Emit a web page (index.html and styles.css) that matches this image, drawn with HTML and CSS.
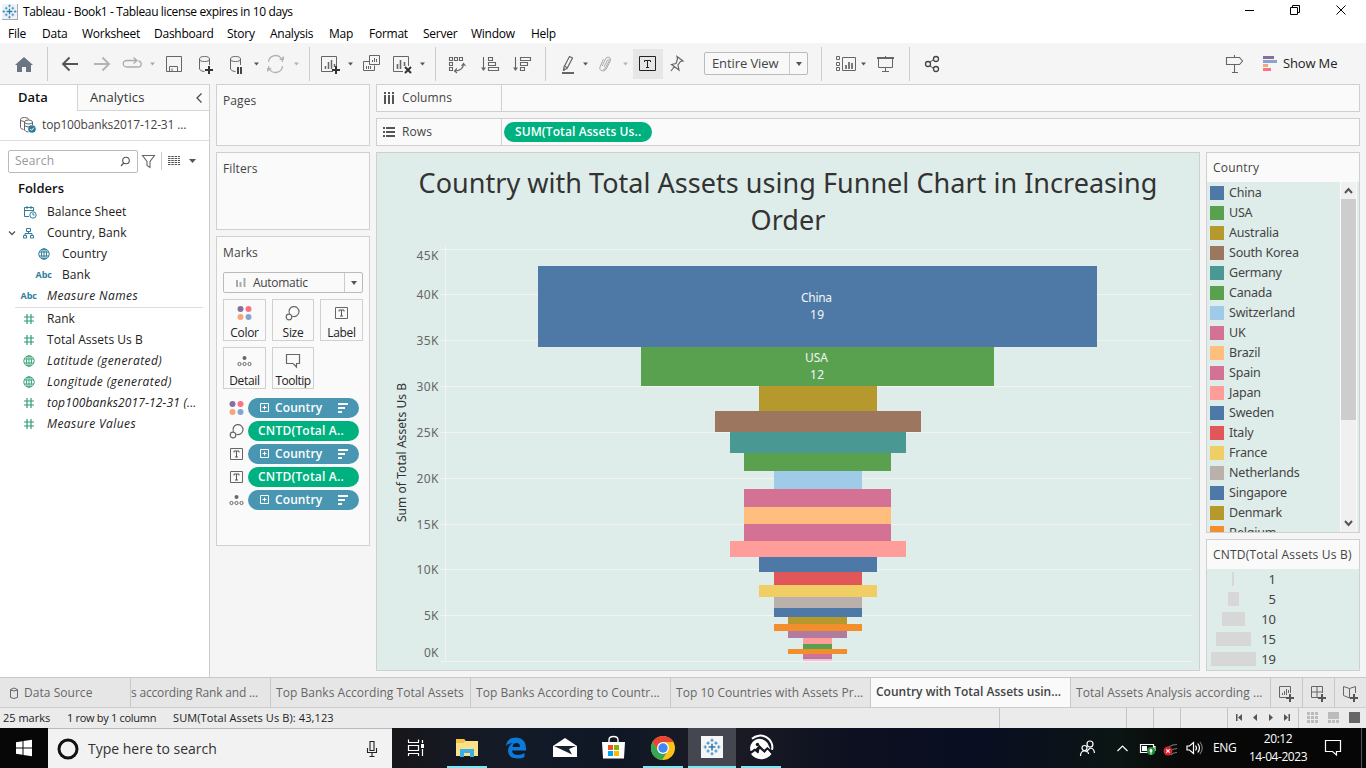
FILE: index.html
```html
<!DOCTYPE html>
<html lang="en">
<head>
<meta charset="utf-8">
<title>Tableau - Book1</title>
<link rel="stylesheet" href="styles.css">
</head>
<body>
<svg class="defs" width="0" height="0">
  <defs>
    <symbol id="tlogo" viewBox="0 0 16 16"><path d="M8 5v6M5 8h6" stroke="#2b7bb0" stroke-width="1.4"/><path d="M8 .5v3M6.500 2h3M8 12.500v3M6.500 14h3M.5 8h3M2 6.500v3M12.500 8h3M14 6.500v3M4.500 3v3M3 4.500h3M11.500 3v3M10 4.500h3M4.500 10v3M3 11.500h3M11.500 10v3M10 11.500h3" stroke="#4a93bd" stroke-width="1"/></symbol>
    <symbol id="hash" viewBox="0 0 12 12"><path d="M4 1v10M8 1v10M1 4h10M1 8h10" stroke="#2f9e74" stroke-width="1.200" fill="none"/></symbol>
    <symbol id="globe" viewBox="0 0 12 12"><g fill="none" stroke="currentColor" stroke-width="1"><circle cx="6" cy="6" r="5.200"/><ellipse cx="6" cy="6" rx="2.500" ry="5.200"/><path d="M1.200 4h9.600M1.200 8h9.600M6 .8v10.400"/></g></symbol>
    <symbol id="dots" viewBox="0 0 16 16"><circle cx="3.500" cy="4" r="3" fill="#876f9c"/><circle cx="11.500" cy="4" r="3" fill="#fc7183"/><circle cx="3.500" cy="12" r="3" fill="#f4a67c"/><circle cx="11.500" cy="12" r="3" fill="#86a4cf"/></symbol>
    <symbol id="size" viewBox="0 0 16 16"><g fill="none" stroke="#666" stroke-width="1.200"><path d="M4.500 8.800A5 5 0 1 1 7.300 11.300"/><circle cx="4" cy="12" r="2.800"/></g></symbol>
    <symbol id="label" viewBox="0 0 16 16"><path d="M1.500 2.500h12v11h-12z" fill="none" stroke="#666"/><path d="M5 6.500V5h5v1.500M7.500 5v6M6 11h3" fill="none" stroke="#555"/></symbol>
    <symbol id="detail" viewBox="0 0 16 16"><circle cx="7.500" cy="5" r="2" fill="#666"/><g fill="none" stroke="#666"><circle cx="2.500" cy="11" r="1.600"/><circle cx="7.500" cy="11" r="1.600"/><circle cx="12.500" cy="11" r="1.600"/></g></symbol>
    <symbol id="plusbox" viewBox="0 0 10 10"><path d="M.5 .5h8v8h-8zM2.500 4.500h4M4.500 2.500v4" fill="none" stroke="#fff"/></symbol>
    <symbol id="sort" viewBox="0 0 12 12"><path d="M1 2h10M1 6h7M1 10h4" stroke="#fff" stroke-width="2"/></symbol>
  </defs>
</svg>

<header class="titlebar">
  <svg class="applogo" width="16" height="16"><use href="#tlogo"/></svg>
  <span class="apptitle">Tableau - Book1 - Tableau license expires in 10 days</span>
  <svg class="winctl" width="126" height="22" viewBox="1240 0 126 22"><path d="M1245 10.500h9M1290.500 7.500h7v7h-7zM1292.500 7V5.500h7v7h-2M1336.500 5.500l9 9M1345.500 5.500l-9 9" fill="none" stroke="#000"/></svg>
</header>

<nav class="menu">
  <span>File</span><span>Data</span><span>Worksheet</span><span>Dashboard</span><span>Story</span><span>Analysis</span><span>Map</span><span>Format</span><span>Server</span><span>Window</span><span>Help</span>
</nav>

<div class="toolbar">
  <svg width="48" height="41" viewBox="0 43 48 41"><path d="M15 65l9-8 9 8h-2v7h-5v-5h-4v5h-5v-7z" fill="#6b7583"/><path d="M47.500 47v34" stroke="#ccc"/></svg>
  <svg width="38" height="41" viewBox="48 43 38 41"><path d="M78 64H63M69.500 57.500L63 64l6.500 6.500" stroke="#555" stroke-width="1.900" fill="none"/></svg>
  <svg width="32" height="41" viewBox="86 43 32 41"><path d="M94 64h15M102.500 57.500L109 64l-6.500 6.500" stroke="#b4b4b4" stroke-width="1.900" fill="none"/></svg>
  <svg width="42" height="41" viewBox="118 43 42 41"><path d="M136 60.500h-9a3.500 3 0 0 0 0 6.500h10a3.500 3 0 0 0 1.500-6M133.500 57.500l3.500 3-3.500 3" stroke="#aaa" stroke-width="1.300" fill="none"/><path d="M150 62.500h5l-2.500 3z" fill="#aaa"/></svg>
  <svg width="30" height="41" viewBox="160 43 30 41"><path d="M166.500 56.500h15v15h-15zM169.500 71v-4.500h8V71M172 71v-2.500" stroke="#666" fill="none"/></svg>
  <svg width="32" height="41" viewBox="190 43 32 41"><g fill="none" stroke="#666"><ellipse cx="204.500" cy="59" rx="5" ry="2.500"/><path d="M199.500 59v10q1 2.500 5 2.500M209.500 59v6"/></g><path d="M209 66v8M205 70h8" stroke="#333" stroke-width="2"/></svg>
  <svg width="44" height="41" viewBox="222 43 44 41"><g fill="none" stroke="#666"><ellipse cx="235.500" cy="59" rx="5" ry="2.500"/><path d="M230.500 59v10q1 2.500 5 2.500M240.500 59v6"/></g><path d="M238 67v7M241 67v7" stroke="#333" stroke-width="1.800"/><path d="M254 62.500h5l-2.500 3z" fill="#555"/></svg>
  <svg width="46" height="41" viewBox="266 43 46 41"><path d="M268.500 62a7 7 0 0 1 13-3M282.500 66a7 7 0 0 1-13 3M268.500 66q0 2 1.500 4M282.500 62q0-2-1-3" stroke="#b4b4b4" fill="none" stroke-width="1.300"/><path d="M279 60h5v-4zM267 68h5l-5 4z" fill="#b4b4b4"/><path d="M294 62.500h5l-2.500 3z" fill="#b4b4b4"/><path d="M309.500 47v34" stroke="#ccc"/></svg>
  <svg width="44" height="41" viewBox="312 43 44 41"><path d="M333 71.500h-11.500v-15h15V66" stroke="#666" fill="none"/><path d="M325.500 69v-3M328.500 69v-7M331.500 69v-9M334.500 67v-3" stroke="#666" stroke-width="1.500"/><path d="M336 66v8M332 70h8" stroke="#333" stroke-width="2"/><path d="M348 62.500h5l-2.500 3z" fill="#555"/></svg>
  <svg width="32" height="41" viewBox="356 43 32 41"><path d="M369.500 55.500h10v9h-10zM369 61.500h-5.500v9h11v-5M366.500 69v-3M368.500 69v-3M370.500 69v-3M372.500 62v-2M374.500 62v-4M376.500 62v-3" stroke="#666" fill="none"/></svg>
  <svg width="50" height="41" viewBox="388 43 50 41"><path d="M403 71.500h-9.500v-15h15V66" stroke="#666" fill="none"/><path d="M397.500 69v-5M400.500 69v-9M404.500 66v-4" stroke="#666" stroke-width="1.600"/><path d="M405 67l6 6M411 67l-6 6" stroke="#333" stroke-width="2"/><path d="M420 62.500h5l-2.500 3z" fill="#555"/><path d="M435.500 47v34" stroke="#ccc"/></svg>
  <svg width="36" height="41" viewBox="438 43 36 41"><path d="M449.500 57.500h3v3h-3zM454.500 57.500h3v3h-3zM459.500 57.500h3v3h-3zM449.500 62.500h3v3h-3zM449.500 67.500h3v3h-3zM463.500 64q0 6-8 7M461.500 66l2-2.500 2 2.500M457 68.500l-2.500 2.500 2.500 2" fill="none" stroke="#666" stroke-width="1.100"/></svg>
  <svg width="32" height="41" viewBox="474 43 32 41"><path d="M483.500 57v13M488.500 57.500h4v3h-4zM488.500 62.500h7v3h-7zM488.500 67.500h10v3h-10z" fill="none" stroke="#666" stroke-width="1.100"/><path d="M481 67.500h5l-2.500 3.500z" fill="#666"/></svg>
  <svg width="42" height="41" viewBox="506 43 42 41"><path d="M515.500 57v13M520.500 57.500h10v3h-10zM520.500 62.500h7v3h-7zM520.500 67.500h4v3h-4z" fill="none" stroke="#666" stroke-width="1.100"/><path d="M513 67.500h5l-2.500 3.500z" fill="#666"/><path d="M545.500 47v34" stroke="#ccc"/></svg>
  <svg width="46" height="41" viewBox="548 43 46 41"><path d="M564 67l5.500-10.500 3 1.500-5.500 10.500-3.500 1.500zM564 66l3.500 1.800M564 68v3" fill="none" stroke="#666" stroke-width="1.200"/><path d="M562 73h12" stroke="#666" stroke-width="2"/><path d="M583 62.500h5l-2.500 3z" fill="#555"/></svg>
  <svg width="39" height="41" viewBox="594 43 39 41"><path d="M602 66l4-8q2-2 4 0 1 1 .5 2.500l-4.500 9q-2 2.500-5 1-2-1.500-1-3.500l3.500-8M604 67l3.500-7q1-1 2 0L605 69q-1 1-2 0" fill="none" stroke="#aaa"/><path d="M623 62.500h5l-2.500 3z" fill="#b4b4b4"/></svg>
  <svg width="30" height="41" viewBox="633 43 30 41"><path d="M633 49h30v30h-30z" fill="#e6e6e6"/><path d="M639.500 56.500h16v14h-16z" fill="none" stroke="#222"/><path d="M644.500 62v-1.500h6v1.500M647.500 60v8M646 67.500h3" fill="none" stroke="#222"/></svg>
  <svg width="41" height="41" viewBox="663 43 41 41"><path d="M677 56.500l6 4.500-2.500.5-2.500 3.500 1 5-7.500-5.500 4.500-1 1.500-4.500zM674.500 66.500l-3.500 4.500" fill="none" stroke="#666" stroke-width="1.200"/></svg>
  <div class="fit"><span>Entire View</span><i></i></div>
  <svg width="60" height="41" viewBox="808 43 60 41"><path d="M821.500 47v34" stroke="#ccc"/><path d="M836.500 56.500h3v3h-3zM836.500 62.500h3v3h-3zM836.500 67.500h3v3h-3zM842.500 57.500h13v13h-13z" fill="none" stroke="#666"/><path d="M846 69v-4M849 69v-7M852 69v-6" stroke="#666" stroke-width="1.700"/><path d="M861 62.500h5l-2.500 3z" fill="#555"/></svg>
  <svg width="46" height="41" viewBox="868 43 46 41"><path d="M877 58h17" stroke="#666" stroke-width="2"/><path d="M878.500 59v8.500h14V59M885.500 56v2M885.500 68v3M882 71.500h7" stroke="#666" fill="none"/><path d="M909.500 47v34" stroke="#ccc"/></svg>
  <svg width="40" height="41" viewBox="914 43 40 41"><path d="M928 63.500l7-5M928 64.500l7 5" stroke="#444"/><g fill="#f5f5f5" stroke="#444" stroke-width="1.300"><circle cx="928" cy="64" r="2.500"/><circle cx="936" cy="59" r="2.500"/><circle cx="936" cy="69" r="2.500"/></g></svg>
  <svg class="signpost" width="36" height="41" viewBox="1220 43 36 41"><path d="M1226.500 57.500h13l3 3.500-3 3.500h-13zM1234.500 55v2M1234.500 64.500v8M1232 72.500h6" fill="none" stroke="#666" stroke-width="1.100"/></svg>
  <svg width="27" height="41" viewBox="1256 43 27 41"><path d="M1263 56h11v3h-11z" fill="#876f9c"/><path d="M1263 60h14v3h-14z" fill="#86a4cf"/><path d="M1263 64h5v3h-5z" fill="#f4a67c"/><path d="M1263 68h8v3h-8z" fill="#fc7183"/></svg>
  <span class="showme">Show Me</span>
</div>

<main class="work">
  <aside class="datapane">
    <div class="dtabs"><b class="ton">Data</b><div class="toff"><span>Analytics</span><svg width="8" height="10" viewBox="0 0 8 10"><path d="M6.500 .5L2 5l4.500 4.500" fill="none" stroke="#444" stroke-width="1.200"/></svg></div></div>
    <div class="source"><svg width="18" height="18" viewBox="0 0 18 18"><g fill="none" stroke="#666"><ellipse cx="5.500" cy="3.500" rx="4" ry="2"/><path d="M1.500 3.500v8q1 2 3 2"/><ellipse cx="9.500" cy="6" rx="4" ry="2" fill="#fff"/><path d="M5.500 6v8q1 2 4 2M13.500 6v3M6 10q3 2 6 0"/></g><circle cx="13" cy="13" r="3.800" fill="#2f7d9c"/><path d="M11.300 13l1.300 1.300 2.300-2.600" stroke="#fff" fill="none"/></svg><span>top100banks2017-12-31 ...</span></div>
    <div class="searchrow">
      <div class="search"><span>Search</span><svg width="11" height="11" viewBox="0 0 11 11"><circle cx="6" cy="4.500" r="3.300" fill="none" stroke="#555" stroke-width="1.100"/><path d="M3.700 7L1 10" stroke="#555" stroke-width="1.200"/></svg></div>
      <svg width="62" height="26" viewBox="138 147 62 26"><path d="M142.500 154.500h12l-4.500 6v6l-3-2v-4z" fill="none" stroke="#666" stroke-width="1.100"/><path d="M161.500 151v18" stroke="#ccc"/><g stroke="#555" stroke-dasharray="2.500 .8"><path d="M168 155.500h12M168 157.500h12M168 159.500h12M168 161.500h12M168 163.500h12"/></g><path d="M189 158h7l-3.500 4z" fill="#555"/></svg>
    </div>
    <h2 class="folders">Folders</h2>
    <ul class="fields">
      <li><svg class="fi cal" width="14" height="14" viewBox="0 0 14 14"><path d="M6 11.500H1.500v-9h9V6M1.500 5.500h9M4 1v3M8 1v3" fill="none" stroke="#2f7d9c"/><circle cx="10" cy="10" r="3.200" fill="#fff" stroke="#2f7d9c"/><path d="M10 8v2h1.500" fill="none" stroke="#2f7d9c"/></svg><span>Balance Sheet</span></li>
      <li><svg class="fi tree" width="30" height="12" viewBox="0 0 30 12"><path d="M1 4.500l3 3 3-3" fill="none" stroke="#555" stroke-width="1.300"/><path d="M18.500 1.500h4v3h-4zM15.500 8.500h3v2.500h-3zM22.500 8.500h3v2.500h-3zM20.500 4.500v2M17 8.500v-2h7v2" fill="none" stroke="#2f7d9c"/></svg><span>Country, Bank</span></li>
      <li class="sub"><svg class="fi blue" width="12" height="12"><use href="#globe"/></svg><span>Country</span></li>
      <li class="sub"><b class="abc">Abc</b><span>Bank</span></li>
      <li><b class="abc">Abc</b><em>Measure Names</em></li>
    </ul>
    <ul class="fields meas">
      <li><svg class="fi" width="12" height="12"><use href="#hash"/></svg><span>Rank</span></li>
      <li><svg class="fi" width="12" height="12"><use href="#hash"/></svg><span>Total Assets Us B</span></li>
      <li><svg class="fi green" width="12" height="12"><use href="#globe"/></svg><em>Latitude (generated)</em></li>
      <li><svg class="fi green" width="12" height="12"><use href="#globe"/></svg><em>Longitude (generated)</em></li>
      <li><svg class="fi" width="12" height="12"><use href="#hash"/></svg><em class="tbl">top100banks2017-12-31 (...</em></li>
      <li><svg class="fi" width="12" height="12"><use href="#hash"/></svg><em>Measure Values</em></li>
    </ul>
  </aside>

  <section class="cards">
    <div class="card pages">Pages</div>
    <div class="card filters">Filters</div>
    <div class="card marks">
      <div class="mlabel">Marks</div>
      <div class="mtype"><svg width="10" height="10" viewBox="0 0 10 10"><path d="M1 2v7M4.500 4v5M8.500 0v9" stroke="#aaa" stroke-width="2"/></svg><span>Automatic</span><i></i></div>
      <div class="mbtns">
        <div><svg width="16" height="16"><use href="#dots"/></svg>Color</div>
        <div><svg width="16" height="16"><use href="#size"/></svg>Size</div>
        <div><svg width="16" height="16"><use href="#label"/></svg>Label</div>
        <div><svg width="16" height="16"><use href="#detail"/></svg>Detail</div>
        <div class="tip"><svg width="16" height="16" viewBox="0 0 16 16"><path d="M1.500 1.500h13v9h-3v3.500l-3.500-3.500h-6.500z" fill="none" stroke="#666" stroke-width="1.200"/></svg>Tooltip</div>
      </div>
      <div class="mrow"><svg width="16" height="16"><use href="#dots"/></svg><div class="pill blue"><svg width="10" height="10"><use href="#plusbox"/></svg><span>Country</span><svg width="12" height="12"><use href="#sort"/></svg></div></div>
      <div class="mrow"><svg width="16" height="16"><use href="#size"/></svg><div class="pill green">CNTD(Total A..</div></div>
      <div class="mrow"><svg width="16" height="16"><use href="#label"/></svg><div class="pill blue"><svg width="10" height="10"><use href="#plusbox"/></svg><span>Country</span><svg width="12" height="12"><use href="#sort"/></svg></div></div>
      <div class="mrow"><svg width="16" height="16"><use href="#label"/></svg><div class="pill green">CNTD(Total A..</div></div>
      <div class="mrow"><svg width="16" height="16"><use href="#detail"/></svg><div class="pill blue"><svg width="10" height="10"><use href="#plusbox"/></svg><span>Country</span><svg width="12" height="12"><use href="#sort"/></svg></div></div>
    </div>
  </section>

  <section class="sheet">
    <div class="shelf"><div class="sname"><svg width="12" height="12" viewBox="0 0 12 12"><path d="M2 0v2M6 0v2M10 0v2M2 3v9M6 3v9M10 3v9" stroke="#555" stroke-width="2"/></svg>Columns</div></div>
    <div class="shelf"><div class="sname"><svg width="12" height="12" viewBox="0 0 12 12"><path d="M0 2h2M0 6h2M0 10h2M3 2h9M3 6h9M3 10h9" stroke="#555" stroke-width="2"/></svg>Rows</div><div class="pill green sum">SUM(Total Assets Us..</div></div>
    <div class="viewrow">
      <div class="view">
        <h1>Country with Total Assets using Funnel Chart in Increasing<br>Order</h1>
        <svg class="chart" width="822" height="426" viewBox="377 244 822 426">
          <path class="grid" d="M440 249.500h752M440 294.500h752M440 340.500h752M440 386.500h752M440 432.500h752M440 478.500h752M440 524.500h752M440 569.500h752M440 615.500h752M440 661.500h752M445.500 246v416"/>
          <g class="axis">
            <text x="416.500" y="260" textLength="22">45K</text><text x="416.500" y="299" textLength="22">40K</text><text x="416.500" y="345" textLength="22">35K</text><text x="416.500" y="391" textLength="22">30K</text><text x="416.500" y="437" textLength="22">25K</text><text x="416.500" y="483" textLength="22">20K</text><text x="416.500" y="529" textLength="22">15K</text><text x="416.500" y="574" textLength="22">10K</text><text x="424" y="620" textLength="14.500">5K</text><text x="424" y="657" textLength="14.500">0K</text>
          </g>
          <text class="axtitle" transform="translate(406 522) rotate(-90)" textLength="139">Sum of Total Assets Us B</text>
          <g shape-rendering="crispEdges">
            <path fill="#4e79a7" d="M538 266h559v81H538zM759 557h118v15H759zM774 608h88v9h-88z"/>
            <path fill="#59a14f" d="M641 347h353v39H641zM744 453h147v18H744zM803 644h29v5h-29z"/>
            <path fill="#b6992d" d="M759 386h118v25H759zM788 617h59v7h-59z"/>
            <path fill="#9d7660" d="M715 411h206v21H715z"/>
            <path fill="#499894" d="M730 432h176v21H730z"/>
            <path fill="#a0cbe8" d="M774 471h88v18h-88z"/>
            <path fill="#d37295" d="M744 489h147v18H744zM744 524h147v17H744zM803 654h29v3h-29z"/>
            <path fill="#ffbe7d" d="M744 507h147v17H744z"/>
            <path fill="#ff9d9a" d="M730 541h176v16H730zM803 638h29v6h-29z"/>
            <path fill="#e15759" d="M774 572h88v13h-88z"/>
            <path fill="#f1ce63" d="M759 585h118v12H759z"/>
            <path fill="#bab0ac" d="M774 597h88v11h-88z"/>
            <path fill="#f28e2b" d="M774 624h88v7h-88zM788 649h59v5h-59z"/>
            <path fill="#b07aa1" d="M788 631h59v7h-59zM803 657h29v2h-29z"/>
            <path fill="#fabfd2" d="M803 659h29v2h-29z"/>
          </g>
          <g class="bartext"><text x="801" y="302" textLength="31">China</text><text x="810" y="319" textLength="14">19</text><text x="805" y="362" textLength="23">USA</text><text x="810" y="379" textLength="14">12</text></g>
        </svg>
      </div>
      <div class="legends">
        <div class="legend">
          <div class="lhead">Country</div>
          <div class="lbody">
            <ul>
              <li><i class="c1"></i>China</li><li><i class="c2"></i>USA</li><li><i class="c3"></i>Australia</li><li><i class="c4"></i>South Korea</li><li><i class="c5"></i>Germany</li><li><i class="c2"></i>Canada</li><li><i class="c6"></i>Switzerland</li><li><i class="c7"></i>UK</li><li><i class="c8"></i>Brazil</li><li><i class="c7"></i>Spain</li><li><i class="c9"></i>Japan</li><li><i class="c1"></i>Sweden</li><li><i class="c10"></i>Italy</li><li><i class="c11"></i>France</li><li><i class="c12"></i>Netherlands</li><li><i class="c1"></i>Singapore</li><li><i class="c3"></i>Denmark</li><li><i class="c13"></i>Belgium</li>
            </ul>
            <div class="scroll"><svg width="15" height="17" viewBox="0 0 15 17"><path d="M4 11l3.500-4 3.500 4" fill="none" stroke="#555" stroke-width="2"/></svg><div class="thumb"></div><svg width="15" height="17" viewBox="0 0 15 17"><path d="M4 6l3.500 4L11 6" fill="none" stroke="#555" stroke-width="2"/></svg></div>
          </div>
        </div>
        <div class="sizes">
          <div class="lhead">CNTD(Total Assets Us B)</div>
          <ul><li><i class="s1"></i><span>1</span></li><li><i class="s2"></i><span>5</span></li><li><i class="s3"></i><span>10</span></li><li><i class="s4"></i><span>15</span></li><li><i class="s5"></i><span>19</span></li></ul>
        </div>
      </div>
    </div>
  </section>
</main>

<div class="tabs">
  <div class="tab ds"><svg width="10" height="13" viewBox="0 0 10 13"><path d="M1.500 2.500q3.500-3 7 0v8q-3.500 2-7 0zM1.500 3q3.500 2 7 0" fill="none" stroke="#666"/></svg><span>Data Source</span></div>
  <div class="tab cut"><span>s according Rank and ...</span></div>
  <div class="tab"><span>Top Banks According Total Assets</span></div>
  <div class="tab"><span>Top Banks According to Countr...</span></div>
  <div class="tab"><span>Top 10 Countries with Assets Pr...</span></div>
  <div class="tab on"><span>Country with Total Assets usin...</span></div>
  <div class="tab"><span>Total Assets Analysis according ...</span></div>
  <div class="tab new"><svg width="16" height="17" viewBox="0 0 16 17"><path d="M9 12.500H1.500v-11h11V8M4.500 10V8M6.500 10V6M8.500 10V4M10.500 8V5" fill="none" stroke="#666"/><path d="M12 9v8M8 13h8" stroke="#555" stroke-width="2"/></svg></div>
  <div class="tab new"><svg width="16" height="17" viewBox="0 0 16 17"><path d="M8 12.500H1.500v-11h11V8M7 1v11M1 7h12" fill="none" stroke="#666"/><path d="M12 9v8M8 13h8" stroke="#555" stroke-width="2"/></svg></div>
  <div class="tab new"><svg width="16" height="17" viewBox="0 0 16 17"><path d="M7.500 13l-6-2.500v-9l6 2 6-2V8M7.500 3.500V13" fill="none" stroke="#666"/><path d="M12 9v8M8 13h8" stroke="#555" stroke-width="2"/></svg></div>
</div>

<div class="status">
  <span class="st1">25 marks</span><span class="st2">1 row by 1 column</span><span class="st3">SUM(Total Assets Us B): 43,123</span>
  <svg width="367" height="20" viewBox="999 708 367 20"><path d="M999.500 708v20M1126.500 708v20M1153.500 708v20M1180.500 708v20M1227.500 708v20M1298.500 708v20" stroke="#c4c4c4"/><path d="M1236 714h1.500v7h-1.500zM1242 714v7l-4-3.500zM1257 714v7l-4-3.500zM1269 714v7l4-3.500zM1284 714v7l4-3.500zM1288.500 714h1.500v7h-1.500z" fill="#555"/><path d="M1307 712h3v3h-3zM1311 712h3v3h-3zM1315 712h3v3h-3zM1307 716h3v3h-3zM1311 716h3v3h-3zM1315 716h3v3h-3zM1307 720h3v3h-3zM1311 720h3v3h-3zM1315 720h3v3h-3zM1328 712h11v7h-11zM1328 720h3v3h-3zM1332 720h3v3h-3zM1336 720h3v3h-3z" fill="#bbb"/><path d="M1349 712h11v11h-11z" fill="#666"/></svg>
</div>

<footer class="taskbar">
  <svg width="48" height="40" viewBox="0 728 48 40"><path d="M16 742.200l6.500-1v6.300H16zM23.500 741l8.500-1.200v7.700h-8.500zM16 748.500h6.500v6.300l-6.500-1zM23.500 748.500h8.500v7.700l-8.500-1.200z" fill="#fff"/></svg>
  <div class="tsearch"><svg width="22" height="24" viewBox="0 0 22 24"><circle cx="11" cy="12" r="9" fill="none" stroke="#111" stroke-width="3"/></svg><span>Type here to search</span><svg class="mic" width="12" height="18" viewBox="0 0 12 18"><path d="M4 1.500h4v9H4zM1.500 8v4.500h9V8M6 13v3.500M3.500 16.500h5" fill="none" stroke="#222" stroke-width="1.100"/></svg></div>
  <svg width="50" height="40" viewBox="392 728 50 40"><path d="M408.500 742v-2.500M418.500 742v-2.500M408 742.500h11M408.500 745.500h10v5h-10zM408 753.500h11M408.500 754v2M418.500 754v2M422.500 740v3M422.500 749v7" fill="none" stroke="#fff" stroke-width="1.200"/><path d="M421 744h3v4h-3z" fill="#fff"/></svg>
  <svg width="50" height="40" viewBox="442 728 50 40"><path d="M456 739h8l1.500 2H478v15h-22z" fill="#ffe08a"/><path d="M456 739h8l1.500 2-1.500 2h-8z" fill="#f5c242"/><path d="M460 757v-8h14v8h-4v-4h-6v4z" fill="#37b0e8"/><path d="M447 766h40v2h-40z" fill="#76e9f5"/></svg>
  <svg width="49" height="40" viewBox="492 728 49 40"><path d="M506 746q1-8.500 10.500-8.500 9.500 1 9.500 11v2h-14q.5 4.500 6 4.500 3.500 0 6.500-2v4q-3 1.500-7 1.500-9 0-9.500-7.500 0-5.500 5-8-5 .5-7 3zM512.500 747h7.500q0-4-3.500-4t-4 4z" fill="#0a7bdc"/></svg>
  <svg width="49" height="40" viewBox="541 728 49 40"><path d="M553 746l12-8 12 8v11h-24z" fill="#fff"/><path d="M554 746l18 8.500-3-5.500 7-3z" fill="#182131"/></svg>
  <svg width="49" height="40" viewBox="590 728 49 40"><path d="M602 742h23l-1 16.500h-21z" fill="#fff"/><path d="M609 742v-2q0-3.500 4.500-3.500t4.500 3.500v2" fill="none" stroke="#fff" stroke-width="1.400"/><path d="M608 745h5v5h-5z" fill="#f25022"/><path d="M614 745h5v5h-5z" fill="#7fba00"/><path d="M608 751h5v5h-5z" fill="#00a4ef"/><path d="M614 751h5v5h-5z" fill="#ffb900"/></svg>
  <svg width="49" height="40" viewBox="639 728 49 40"><circle cx="663" cy="748" r="12" fill="#fbc116"/><path d="M652.600 742a12 12 0 0 1 20.800 0H663l-5 9z" fill="#ea4335"/><path d="M652.600 742a12 12 0 0 0 9.500 18l5.500-9-9.500 0z" fill="#34a853"/><circle cx="663" cy="748" r="6" fill="#fff"/><circle cx="663" cy="748" r="4.700" fill="#4285f4"/><path d="M643 766h40v2h-40z" fill="#76e9f5"/></svg>
  <div class="active"><svg width="22" height="22" viewBox="0 0 22 22"><path d="M0 0h22v22H0z" fill="#f4f6f8"/><use href="#tlogo" x="2" y="2" width="18" height="18"/></svg></div>
  <svg width="50" height="40" viewBox="736 728 50 40"><path d="M752 738.800a12 11.500 0 0 1 20 11" fill="none" stroke="#fff" stroke-width="2"/><path d="M750.500 751a9.500 9.500 0 0 1 17-8l3 6.500-3.500-2-3.500 3-4.500-5-5 5z" fill="#fff"/><circle cx="757.500" cy="744.500" r="1.700" fill="#10151f"/><path d="M751 754l4-3 3 2.500 1.500-5 5 4.500 3-3.500 4 4.500a12 11 0 0 1-20.500 0z" fill="#fff"/><path d="M749.500 753.500l5-4 3.500 2.500 1.500-6 5 5 3-3 5 5.500" stroke="#111722" stroke-width="1.400" fill="none"/><path d="M741 766h40v2h-40z" fill="#76e9f5"/></svg>
  <svg class="tray" width="136" height="40" viewBox="1072 728 136 40"><g fill="none" stroke="#fff" stroke-width="1.200"><circle cx="1090" cy="744" r="3"/><circle cx="1084.500" cy="748" r="2.500"/><path d="M1080.500 756q0-5 4-5t4 3M1086 752l4-4q4 0 4.500 5M1117.500 751l5-5 5 5"/><path d="M1140.500 744.500h13v8h-13zM1154 746.500h1v4h-1"/><path d="M1187 746h2.500l4-3.500v11l-4-3.500h-2.500zM1195.500 745.500q2 2.500 0 5M1197.700 743.500q3.500 4.500 0 9"/><path d="M1200 742q4.500 6 0 12M1165 751q3-6 12-6.500M1168 753q3-4 9-4.500M1171 755q2-2.500 6-2.500" stroke="#777"/></g><path d="M1142 746h5v5h-5z" fill="#fff"/><circle cx="1151" cy="751" r="4" fill="#159332"/><path d="M1151 748.500q3 2 0 4.500-3-2.500 0-4.500zM1150.500 752h1v2.500h-1z" fill="#fff"/><circle cx="1168" cy="751" r="4.500" fill="#d8222c"/><path d="M1166.300 749.300l3.400 3.400M1169.700 749.300l-3.400 3.400" stroke="#fff" stroke-width="1.200"/></svg>
  <span class="lang">ENG</span>
  <div class="clock"><span>20:12</span><span>14-04-2023</span></div>
  <svg class="note" width="48" height="40" viewBox="1318 728 48 40"><path d="M1325.500 740.500h15v11h-4v3.500l-4-3.500h-7z" fill="none" stroke="#fff" stroke-width="1.200"/><path d="M1361.500 728v40" stroke="#555"/></svg>
</footer>
</body>
</html>
```
FILE: styles.css
```css
* { box-sizing: border-box; }
body { margin: 0; width: 1366px; height: 768px; overflow: hidden; display: flex; flex-direction: column; background: #f5f5f5; color: #333; font: 12px/16px "Open Sans", "Noto Sans", sans-serif; }
ul, h1, h2 { margin: 0; padding: 0; list-style: none; font-weight: normal; }
svg { display: block; flex: none; }
.defs { display: none; }
span, em, b { white-space: nowrap; }

.titlebar { height: 22px; flex: none; background: #fff; display: flex; align-items: center; color: #000; }
.applogo { margin: 1px 5px 0 2px; border-right: 1px solid #aaa; border-bottom: 1px solid #aaa; background: #eef3f7; }
.apptitle { letter-spacing: -.37px; padding-top: 2px; }
.winctl { margin-left: auto; }
.menu { height: 21px; flex: none; background: #fff; color: #000; line-height: 24px; display: grid; grid-template-columns: 34px 40px 72px 73px 43px 59px 40px 54px 48px 60px 60px; padding-left: 8px; letter-spacing: -.25px; }

.toolbar { height: 41px; flex: none; display: flex; align-items: center; }
.fit { width: 104px; height: 23px; border: 1px solid #bbb; border-radius: 2px; background: #f8f8f8; font-size: 13px; line-height: 20px; display: flex; padding-left: 7px; color: #444; }
.fit span { width: 77px; letter-spacing: -.1px; }
.fit i, .mtype i { border-left: 1px solid #ccc; width: 18px; display: flex; align-items: center; justify-content: center; }
.fit i::after, .mtype i::after { content: ""; border: 3.5px solid transparent; border-top: 4px solid #555; border-bottom: 0; }
.signpost { margin-left: 266px; }
.showme { font-size: 13px; color: #222; letter-spacing: -.15px; padding-bottom: 1px; }

.work { height: 593px; flex: none; display: flex; }
.datapane { width: 210px; background: #fff; border-right: 1px solid #ccc; border-top: 1px solid #d4d4d4; }
.dtabs { height: 26px; display: flex; line-height: 25px; font-size: 13px; }
.ton { width: 77px; padding-left: 18px; font-weight: 600; color: #111; }
.toff { flex: 1; border: solid #d4d4d4; border-width: 0 0 1px 1px; background: #fafafa; padding: 0 6px 0 12px; display: flex; justify-content: space-between; align-items: center; letter-spacing: .1px; }
.source { height: 30px; border-bottom: 1px solid #ddd; display: flex; align-items: center; padding: 0 0 1px 19px; gap: 5px; color: #444; letter-spacing: -.15px; }
.searchrow { display: flex; padding: 7px 0 0 8px; align-items: center; }
.search { width: 130px; height: 23px; border: 1px solid #bbb; border-radius: 2px; display: flex; justify-content: space-between; align-items: center; padding: 0 6px; color: #999; font-size: 12px; letter-spacing: .2px; }
.folders { font-weight: 600; font-size: 13px; color: #111; padding: 4px 0 0 18px; line-height: 20px; }
.fields { padding-top: 3px; color: #222; }
.fields li { height: 21px; display: grid; grid-template-columns: 47px 1fr; align-items: center; padding-top: 1px; }
.fields li.sub { grid-template-columns: 62px 1fr; }
.fields span { letter-spacing: .04px; }
.fields em { letter-spacing: .42px; }
.fields em.tbl { letter-spacing: .17px; }
.fi, .abc { justify-self: end; margin-right: 12px; }
.fi.tree { margin-right: 9px; }
.fi.cal { margin-right: 10px; }
.fi.blue { color: #2f7d9c; }
.fi.green { color: #3da57d; }
.abc { font: bold 9px/12px "Open Sans", sans-serif; color: #2f7d9c; margin-right: 10px; }
.fields.meas { margin: 1px 6px 0 15px; border-top: 1px solid #ddd; padding-top: 0; }
.fields.meas li { grid-template-columns: 32px 1fr; }

.cards { width: 166px; padding: 0 0 0 6px; }
.card { width: 154px; border: 1px solid #d0d0d0; background: #fafafa; color: #444; margin-bottom: 6px; padding: 8px 6px; letter-spacing: .1px; }
.pages { height: 62px; }
.filters { height: 78px; }
.marks { height: 310px; }
.mtype { margin-top: 11px; height: 21px; border: 1px solid #bbb; border-radius: 2px; display: flex; align-items: center; padding-left: 12px; }
.mtype span { margin-left: 7px; flex: 1; letter-spacing: -.3px; }
.mtype i { height: 19px; }
.mbtns { display: grid; grid-template-columns: 43px 42px 43px; gap: 6px; margin-top: 6px; }
.mbtns div { height: 42px; border: 1px solid #d0d0d0; display: flex; flex-direction: column; align-items: center; padding-top: 5px; gap: 4px; color: #222; letter-spacing: -.3px; }
.mbtns .tip { letter-spacing: -.55px; }
.mrow { display: flex; align-items: center; height: 23px; gap: 9px; padding-left: 6px; width: 136px; }
.mbtns + .mrow { margin-top: 7px; }
.mrow > svg { margin-right: -6px; }
.pill { height: 20px; border-radius: 10px; color: #fff; font-weight: 600; display: flex; align-items: center; }
.mrow .pill { flex: 1 0 111px; padding: 0 10px 0 12px; }
.pill.green { background: #00b180; }
.mrow .pill.green { padding-left: 10px; letter-spacing: .2px; }
.pill.blue { background: #4996b2; }
.pill.blue span { margin: 0 auto 0 5px; }

.sheet { width: 984px; }
.shelf { height: 28px; border: 1px solid #d0d0d0; background: #fafafa; margin-bottom: 6px; display: flex; align-items: center; color: #444; }
.sname { width: 125px; height: 26px; border-right: 1px solid #d0d0d0; display: flex; align-items: center; padding-left: 6px; gap: 7px; letter-spacing: .1px; }
.sum { width: 148px; margin-left: 2px; padding-left: 11px; letter-spacing: .1px; }
.viewrow { display: flex; gap: 6px; height: 519px; }
.view { width: 824px; border: 1px solid #d0d0d0; background: #dfedea; }
h1 { font: 27px/37px "Noto Sans", sans-serif; letter-spacing: .03px; text-align: center; height: 91px; padding-top: 11px; color: #333; white-space: nowrap; }
.chart text { font: 12px "Noto Sans", sans-serif; fill: #666; }
.chart .axtitle { fill: #333; }
.chart .bartext text { fill: #f2f6fa; }
.grid { stroke: #f2f3f2; fill: none; }

.legends { width: 154px; }
.legend, .sizes { border: 1px solid #d0d0d0; background: #dfedea; font-family: "Noto Sans", sans-serif; color: #444; }
.legend { height: 381px; margin-bottom: 6px; }
.sizes { height: 132px; }
.lhead { height: 29px; background: #fafafa; padding: 7px 6px; font-family: "Open Sans", sans-serif; white-space: nowrap; letter-spacing: .2px; }
.lbody { height: 350px; overflow: hidden; display: flex; justify-content: space-between; }
.legend li { height: 20px; display: flex; align-items: center; gap: 5px; padding: 1px 0 0 3px; font-size: 12.5px; letter-spacing: -.2px; }
.legend li i { width: 14px; height: 14px; }
.scroll { width: 17px; margin-right: 2px; background: #f0f0f0; border: solid #fafafa; border-width: 0 1px; display: flex; flex-direction: column; }
.thumb { height: 221px; background: #cdcdcd; margin-bottom: 95px; }
.c1 { background: #4e79a7; } .c2 { background: #59a14f; } .c3 { background: #b6992d; } .c4 { background: #9d7660; }
.c5 { background: #499894; } .c6 { background: #a0cbe8; } .c7 { background: #d37295; } .c8 { background: #ffbe7d; }
.c9 { background: #ff9d9a; } .c10 { background: #e15759; } .c11 { background: #f1ce63; } .c12 { background: #bab0ac; } .c13 { background: #f28e2b; }
.sizes li { height: 20px; width: 69px; display: grid; grid-template-columns: 52px 17px; align-items: center; }
.sizes li span { text-align: right; font-size: 13px; }
.sizes li i { height: 14px; background: #d7d7d7; justify-self: center; }
.s1 { width: 2px; } .s2 { width: 11px; } .s3 { width: 23px; } .s4 { width: 35px; } .s5 { width: 45px; }

.tabs { height: 30px; flex: none; display: flex; background: #e6e6e6; border-top: 1px solid #c8c8c8; color: #666; }
.tab { width: 200px; flex: none; border-right: 1px solid #c8c8c8; padding: 1px 0 0 5px; display: flex; align-items: center; overflow: hidden; letter-spacing: .04px; }
.tab.ds { width: 131px; padding-left: 9px; gap: 5px; }
.tab.cut { width: 140px; padding-left: 0; letter-spacing: -.18px; }
.tab.on { background: #fafafa; font-weight: 600; color: #444; padding: 0 0 2px 5px; letter-spacing: 0; }
.tab.new { width: 32px; padding-left: 7px; }
.tab.new:last-child { width: 31px; border: 0; }
.status { height: 21px; flex: none; border-top: 1px solid #ccc; background: #ebebeb; font-size: 11px; color: #222; display: flex; align-items: center; }
.st1 { width: 64px; padding-left: 3px; }
.st2 { width: 109px; padding-left: 3px; letter-spacing: -.3px; }
.st3 { width: 826px; letter-spacing: .1px; }

.taskbar { height: 40px; flex: none; display: flex; align-items: center; color: #fff; background: linear-gradient(90deg, #070707 0, #070707 48px, #17161a 392px, #141b27 500px, #0f1725 620px, #1c1c24 720px, #0c1020 850px, #0a0e22 980px, #0b1513 1120px, #080908 1180px, #050505 1366px); }
.tsearch { width: 344px; height: 40px; background: #f2f2f2; color: #333; border-top: 1px solid #bbb; display: flex; align-items: center; padding-left: 9px; font-size: 14px; }
.tsearch span { margin-left: 9px; }
.mic { margin: 0 14px 0 auto; }
.active { width: 48px; height: 40px; background: #44474f; border-bottom: 2px solid #76e9f5; display: flex; align-items: center; justify-content: center; }
.tray { margin-left: 286px; }
.lang { width: 36px; padding-left: 5px; letter-spacing: -.3px; }
.clock { width: 74px; margin-left: -3px; display: flex; flex-direction: column; text-align: center; line-height: 18px; letter-spacing: -.45px; }
.note { margin-left: auto; }
```
